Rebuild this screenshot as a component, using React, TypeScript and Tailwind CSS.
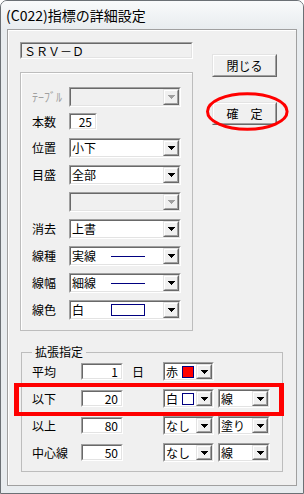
import React from "react";

type P = { className?: string; innerClassName?: string; children?: React.ReactNode };

function Sunken({ className = "", innerClassName = "", children }: P) {
  return (
    <div className={`border border-t-[#a0a0a0] border-l-[#a0a0a0] border-b-white border-r-white ${className}`}>
      <div className={`h-full border border-t-[#696969] border-l-[#696969] border-b-[#e3e3e3] border-r-[#e3e3e3] ${innerClassName}`}>
        {children}
      </div>
    </div>
  );
}

function Raised({ className = "", innerClassName = "", children }: P) {
  return (
    <div className={`border border-t-[#e3e3e3] border-l-[#e3e3e3] border-b-[#696969] border-r-[#696969] ${className}`}>
      <div className={`h-full border border-t-white border-l-white border-b-[#a0a0a0] border-r-[#a0a0a0] bg-[#f0f0f0] flex items-center justify-center ${innerClassName}`}>
        {children}
      </div>
    </div>
  );
}

function Arrow({ disabled }: { disabled?: boolean }) {
  const c = disabled ? "#a0a0a0" : "#000000";
  return (
    <svg width="7" height="4" viewBox="0 0 7 4" shapeRendering="crispEdges">
      <rect x="0" y="0" width="7" height="1" fill={c} />
      <rect x="1" y="1" width="5" height="1" fill={c} />
      <rect x="2" y="2" width="3" height="1" fill={c} />
      <rect x="3" y="3" width="1" height="1" fill={c} />
    </svg>
  );
}

function Combo({
  className = "",
  disabled,
  children,
}: {
  className?: string;
  disabled?: boolean;
  children?: React.ReactNode;
}) {
  return (
    <Sunken className={className} innerClassName={`flex ${disabled ? "bg-[#f0f0f0]" : "bg-white"}`}>
      <div className="flex-1 flex items-center pl-[1px] overflow-hidden whitespace-nowrap">{children}</div>
      <Raised className="w-[16px] h-full">
        <Arrow disabled={disabled} />
      </Raised>
    </Sunken>
  );
}

function TextBox({ className = "", value }: { className?: string; value: string }) {
  return (
    <Sunken className={className} innerClassName="bg-white flex items-center justify-end pr-[3px]">
      <span className="leading-none">{value}</span>
    </Sunken>
  );
}

function Row1({ label, children, className = "", labelClass = "" }: { label: string; children: React.ReactNode; className?: string; labelClass?: string }) {
  return (
    <div className={`flex items-center ${className}`}>
      <span className={`w-[37px] leading-none ${labelClass}`}>{label}</span>
      {children}
    </div>
  );
}

function Row2({
  label,
  value,
  unit,
  c1,
  c2,
  className = "",
}: {
  label: string;
  value: string;
  unit?: string;
  c1: React.ReactNode;
  c2?: React.ReactNode;
  className?: string;
}) {
  return (
    <div className={`flex items-center h-[19px] ${className}`}>
      <span className="w-[49px] leading-none">{label}</span>
      <TextBox className="w-[42px] h-[17px]" value={value} />
      <div className="w-[40px] pl-[9px] leading-none">{unit}</div>
      <Combo className="w-[51px] h-[19px]">{c1}</Combo>
      {c2 ? <Combo className="w-[52px] h-[19px] ml-[4px]">{c2}</Combo> : null}
    </div>
  );
}

export default function App() {
  return (
    <div className="relative w-[304px] h-[494px] bg-[#e8ecef] border border-[#6b7075] rounded-t-[7px] flex flex-col overflow-hidden font-['Noto_Sans_CJK_JP',sans-serif] text-[12px] text-black">
      <div className="h-[28px] flex items-center pl-[5px] bg-linear-to-b from-[#f9fafb] to-[#e8ecef] text-[14px] leading-none">
        (C022)指標の詳細設定
      </div>
      <div className="flex-1 flex px-[6px] pb-[7px]">
        <div className="flex-1 flex flex-col border border-[#a0a0a0] bg-[#f0f0f0] shadow-[inset_1px_1px_0_#ffffff] pl-[12px] pt-[12px]">
          <div className="flex">
            <div className="w-[173px] flex flex-col">
              <Sunken className="h-[17px]" innerClassName="bg-[#f0f0f0] flex items-center pl-[2px]">
                <span className="leading-none">ＳＲＶ－Ｄ</span>
              </Sunken>
              <div className="mt-[13px] h-[259px] border border-[#bdbdbd] shadow-[inset_1px_1px_0_#ffffff] pl-[11px] pt-[14px] flex flex-col">
                <Row1 label="ﾃｰﾌﾞﾙ" labelClass="text-[#a0a0a0]">
                  <Combo className="w-[112px] h-[20px]" disabled />
                </Row1>
                <Row1 label="本数" className="mt-[6px]">
                  <TextBox className="w-[28px] h-[17px]" value="25" />
                </Row1>
                <Row1 label="位置" className="mt-[8px]">
                  <Combo className="w-[112px] h-[20px]">小下</Combo>
                </Row1>
                <Row1 label="目盛" className="mt-[7px]">
                  <Combo className="w-[112px] h-[20px]">全部</Combo>
                </Row1>
                <Row1 label="" className="mt-[7px]">
                  <Combo className="w-[112px] h-[20px]" disabled />
                </Row1>
                <Row1 label="消去" className="mt-[7px]">
                  <Combo className="w-[112px] h-[20px]">上書</Combo>
                </Row1>
                <Row1 label="線種" className="mt-[7px]">
                  <Combo className="w-[112px] h-[20px]">
                    <span className="w-[39px] leading-none">実線</span>
                    <span className="w-[34px] h-px bg-[#000080]" />
                  </Combo>
                </Row1>
                <Row1 label="線幅" className="mt-[7px]">
                  <Combo className="w-[112px] h-[20px]">
                    <span className="w-[39px] leading-none">細線</span>
                    <span className="w-[34px] h-px bg-[#000080]" />
                  </Combo>
                </Row1>
                <Row1 label="線色" className="mt-[7px]">
                  <Combo className="w-[112px] h-[20px]">
                    <span className="w-[39px] leading-none">白</span>
                    <span className="w-[34px] h-[12px] border border-[#000080] bg-white" />
                  </Combo>
                </Row1>
              </div>
            </div>
            <div className="ml-[19px] pt-[12px] flex flex-col">
              <Raised className="w-[65px] h-[23px]">
                <span className="leading-none">閉じる</span>
              </Raised>
              <Raised className="w-[65px] h-[23px] mt-[25px]">
                <span className="leading-none">確　定</span>
              </Raised>
            </div>
          </div>
          <fieldset className="ml-[1px] mt-[14px] w-[262px] border border-[#bdbdbd] pl-[10px] pt-[3px] pb-[9px]">
            <legend className="px-[3px] leading-[14px]">拡張指定</legend>
            <Row2
              label="平均"
              value="1"
              unit="日"
              c1={
                <>
                  <span className="leading-none">赤</span>
                  <span className="ml-[4px] w-[12px] h-[12px] border border-[#000080] bg-[#ff0000]" />
                </>
              }
            />
            <Row2
              className="mt-[8px]"
              label="以下"
              value="20"
              c1={
                <>
                  <span className="leading-none">白</span>
                  <span className="ml-[4px] w-[12px] h-[12px] border border-[#000080] bg-white" />
                </>
              }
              c2={<span className="leading-none">線</span>}
            />
            <Row2
              className="mt-[8px]"
              label="以上"
              value="80"
              c1={<span className="leading-none">なし</span>}
              c2={<span className="leading-none">塗り</span>}
            />
            <Row2
              className="mt-[8px]"
              label="中心線"
              value="50"
              c1={<span className="leading-none">なし</span>}
              c2={<span className="leading-none">線</span>}
            />
          </fieldset>
        </div>
      </div>

      {/* red annotations */}
      <div className="absolute left-[13px] top-[382px] w-[270px] h-[33px] border-x-[5px] border-y-[4px] border-[#ff0000]" />
      <svg className="absolute left-[203px] top-[89px]" width="87" height="44" viewBox="0 0 87 44">
        <ellipse cx="43.3" cy="21.5" rx="39.8" ry="17.8" fill="none" stroke="#ff0000" strokeWidth="3" />
      </svg>
    </div>
  );
}
